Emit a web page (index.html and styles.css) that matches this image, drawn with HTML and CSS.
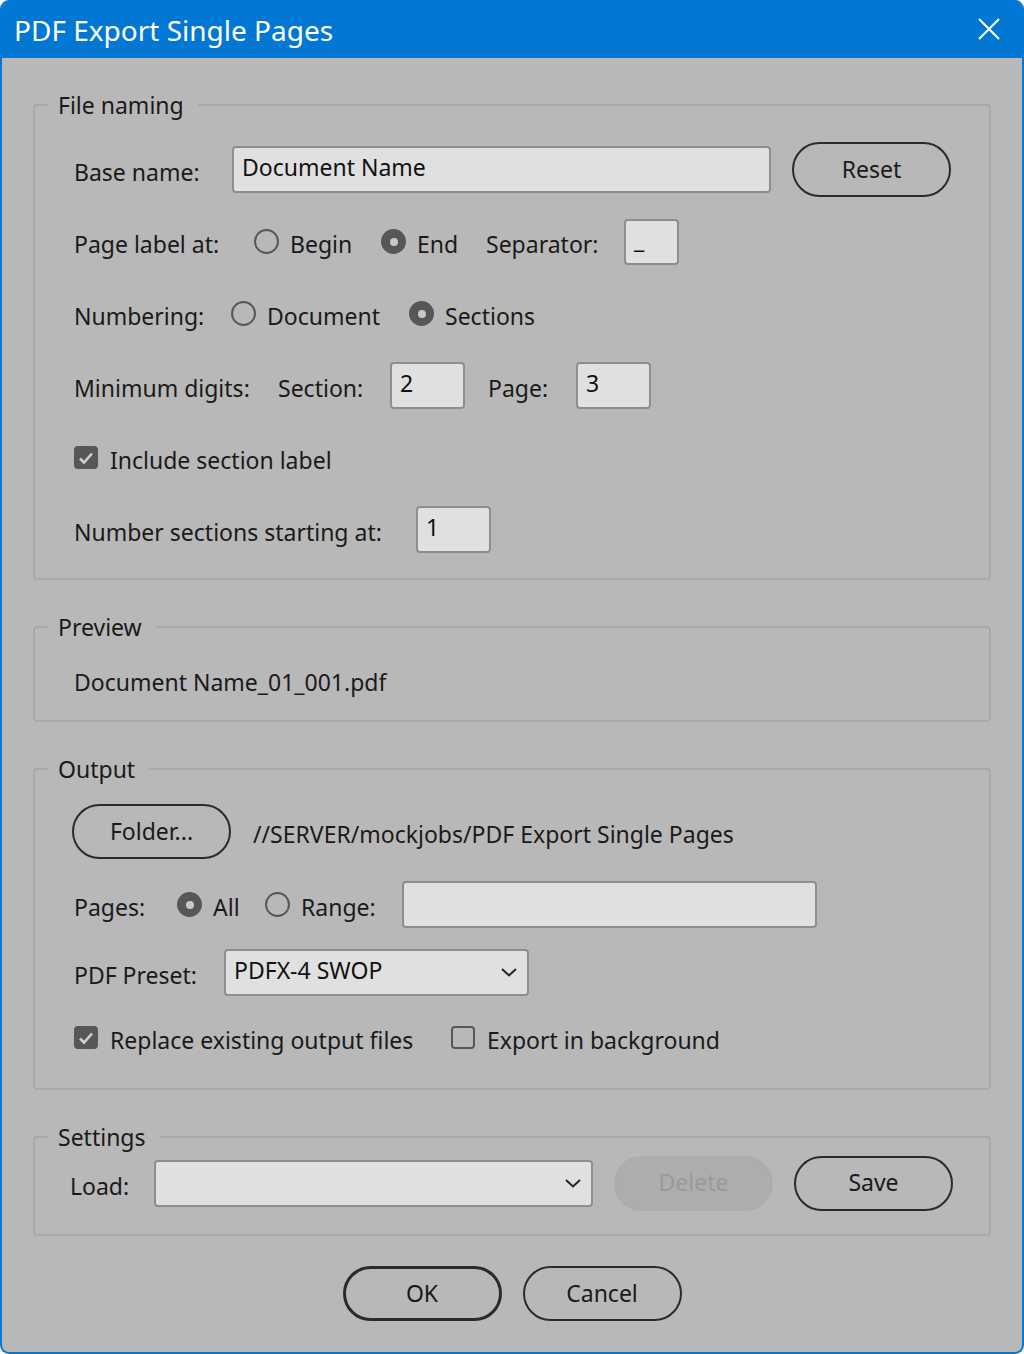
FILE: index.html
```html
<!DOCTYPE html>
<html>
<head>
<meta charset="utf-8">
<link rel="stylesheet" href="styles.css">
</head>
<body>
<div class="window">
  <div class="titlebar">
    <span class="title">PDF Export Single Pages</span>
    <svg class="close" width="22" height="22" viewBox="0 0 22 22"><path d="M1 1 L21 21 M21 1 L1 21" stroke="#fff" stroke-width="2" fill="none"/></svg>
  </div>
  <div class="content">
    <fieldset class="group g-naming">
      <legend>File naming</legend>
      <div class="row">
        <span class="lbl w-base">Base name:</span>
        <div class="input w-basename">Document Name</div>
        <button class="btn reset">Reset</button>
      </div>
      <div class="row">
        <span class="lbl w-pagelabel">Page label at:</span>
        <span class="opt w-begin"><span class="radio"></span>Begin</span>
        <span class="opt w-end"><span class="radio on"></span>End</span>
        <span class="lbl w-sep">Separator:</span>
        <div class="input w-sepbox">_</div>
      </div>
      <div class="row">
        <span class="lbl w-numbering">Numbering:</span>
        <span class="opt w-document"><span class="radio"></span>Document</span>
        <span class="opt"><span class="radio on"></span>Sections</span>
      </div>
      <div class="row">
        <span class="lbl w-mindigits">Minimum digits:</span>
        <span class="lbl w-section">Section:</span>
        <div class="input w-small">2</div>
        <span class="lbl w-page">Page:</span>
        <div class="input w-small">3</div>
      </div>
      <div class="row">
        <span class="opt"><span class="check on"><svg width="16" height="14" viewBox="0 0 16 14"><path d="M2 7.5 L6 11.5 L14 2.5" stroke="#cfcfcf" stroke-width="2.6" fill="none"/></svg></span>Include section label</span>
      </div>
      <div class="row">
        <span class="lbl w-startat">Number sections starting at:</span>
        <div class="input w-small">1</div>
      </div>
    </fieldset>

    <fieldset class="group g-preview">
      <legend>Preview</legend>
      <div class="row row-preview">
        <span class="lbl">Document Name_01_001.pdf</span>
      </div>
    </fieldset>

    <fieldset class="group g-output">
      <legend>Output</legend>
      <div class="row o1">
        <button class="btn folder">Folder...</button>
        <span class="lbl path">//SERVER/mockjobs/PDF Export Single Pages</span>
      </div>
      <div class="row o2">
        <span class="lbl w-pages">Pages:</span>
        <span class="opt w-all"><span class="radio on"></span>All</span>
        <span class="opt w-range"><span class="radio"></span>Range:</span>
        <div class="input w-rangebox"></div>
      </div>
      <div class="row o3">
        <span class="lbl w-preset">PDF Preset:</span>
        <div class="input select w-presetbox"><span>PDFX-4 SWOP</span><svg class="chev" width="16" height="9" viewBox="0 0 16 9"><path d="M1 1 L8 7.5 L15 1" stroke="#222" stroke-width="2" fill="none"/></svg></div>
      </div>
      <div class="row o4">
        <span class="opt w-replace"><span class="check on"><svg width="16" height="14" viewBox="0 0 16 14"><path d="M2 7.5 L6 11.5 L14 2.5" stroke="#cfcfcf" stroke-width="2.6" fill="none"/></svg></span>Replace existing output files</span>
        <span class="opt"><span class="check"></span>Export in background</span>
      </div>
    </fieldset>

    <fieldset class="group g-settings">
      <legend>Settings</legend>
      <div class="row s1">
        <span class="lbl w-load">Load:</span>
        <div class="input select w-loadbox"><span></span><svg class="chev" width="16" height="9" viewBox="0 0 16 9"><path d="M1 1 L8 7.5 L15 1" stroke="#222" stroke-width="2" fill="none"/></svg></div>
        <button class="btn disabled">Delete</button>
        <button class="btn">Save</button>
      </div>
    </fieldset>

    <div class="footer">
      <button class="btn primary">OK</button>
      <button class="btn">Cancel</button>
    </div>
  </div>
</div>
</body>
</html>
```
FILE: styles.css
```css
* { box-sizing: border-box; }
html, body { margin: 0; padding: 0; }
body {
  width: 1024px;
  height: 1354px;
  font-family: "Noto Sans", "Open Sans", sans-serif;
  font-size: 23px;
  color: #1a1a1a;
  background: #ffffff;
}
.window {
  width: 1024px;
  height: 1354px;
  background: #b8b8b8;
  border: 2px solid #0278d4;
  border-top: none;
  border-radius: 9px;
  overflow: hidden;
  display: flex;
  flex-direction: column;
}
.titlebar {
  height: 58px;
  background: #0278d4;
  margin: 0 -2px;
  display: flex;
  align-items: center;
  justify-content: space-between;
  padding: 0 24px 0 14px;
  flex-shrink: 0;
}
.title {
  color: #ffffff;
  font-size: 28px;
  line-height: 1;
  margin-top: 2px;
}
.close { margin-top: -1px; }
.content {
  padding: 33px 31px 0 31px;
  display: flex;
  flex-direction: column;
}
.group {
  margin: 0 0 33px 0;
  border: 2px solid #a9a9a9;
  border-radius: 4px;
  padding: 0 0 0 39px;
  min-width: 0;
}
.group legend {
  margin-left: -26px;
  padding: 0 14px 0 10px;
  line-height: 28px;
  font-size: 23px;
  color: #1a1a1a;
}
.g-naming { padding-top: 17px; padding-bottom: 10px; }
.g-naming .row { height: 72px; }
.row {
  display: flex;
  align-items: center;
  white-space: nowrap;
}
.lbl { display: inline-block; }
.opt {
  display: inline-flex;
  align-items: center;
}
.radio {
  width: 25px;
  height: 25px;
  border: 2px solid #575757;
  border-radius: 50%;
  margin-right: 11px;
  margin-bottom: 5px;
  flex-shrink: 0;
  display: inline-flex;
  align-items: center;
  justify-content: center;
}
.radio.on { background: #575757; }
.radio.on::after {
  content: "";
  width: 8px;
  height: 8px;
  border-radius: 50%;
  background: #c8c8c8;
}
.check {
  width: 24px;
  height: 23px;
  border: 2px solid #575757;
  border-radius: 4px;
  margin-right: 12px;
  margin-bottom: 5px;
  flex-shrink: 0;
  display: inline-flex;
  align-items: center;
  justify-content: center;
}
.check.on { background: #575757; }
.input {
  height: 47px;
  background: #e0e0e0;
  border: 2px solid #8e8e8e;
  border-radius: 4px;
  padding: 0 8px;
  display: flex;
  align-items: center;
  color: #111;
  line-height: 1;
  padding-bottom: 4px;
  margin-bottom: 5px;
}
.select { justify-content: space-between; padding-right: 10px; }
.chev { margin-top: 4px; }
.btn {
  font-family: inherit;
  font-size: 23px;
  color: #1a1a1a;
  width: 159px;
  height: 55px;
  background: transparent;
  border: 2px solid #2b2b2b;
  border-radius: 28px;
  padding: 0 0 2px 0;
}
.row .btn { margin-bottom: 5px; }
.btn.primary { border-width: 3px; }
.btn.disabled { background: #adadad; border-color: #adadad; color: #9a9a9a; }

.w-base { width: 158px; }
.w-basename { width: 539px; }
.reset { margin-left: 21px; }
.w-pagelabel { width: 180px; }
.w-begin { width: 127px; }
.w-end { width: 105px; }
.w-sep { width: 138px; }
.w-sepbox { width: 55px; height: 46px; }
.w-numbering { width: 157px; }
.w-document { width: 178px; }
.w-mindigits { width: 204px; }
.w-section { width: 112px; }
.w-small { width: 75px; }
.w-page { width: 88px; margin-left: 23px; }
.w-startat { width: 342px; }

.g-preview { padding-top: 21px; padding-bottom: 18px; }
.row-preview { height: 40px; }

.g-output { padding-top: 23px; padding-bottom: 20px; }
.g-output .row { height: 56px; }
.o2 { margin-top: 17px; }
.o3 { margin-top: 12px; }
.o4 { margin-top: 9px; }
.folder { margin-left: -2px; }
.path { margin-left: 22px; }
.w-pages { width: 103px; }
.w-all { width: 88px; }
.w-range { width: 137px; }
.w-rangebox { width: 415px; }
.w-preset { width: 150px; }
.w-presetbox { width: 305px; }
.w-replace { width: 377px; }

.g-settings { padding-top: 7px; padding-bottom: 21px; padding-left: 35px; }
.g-settings legend { margin-left: -22px; }
.g-settings .row { height: 55px; gap: 21px; }
.w-load { width: 63px; }
.w-loadbox { width: 439px; }

.footer {
  margin-top: -3px;
  display: flex;
  justify-content: center;
  gap: 21px;
}
```
